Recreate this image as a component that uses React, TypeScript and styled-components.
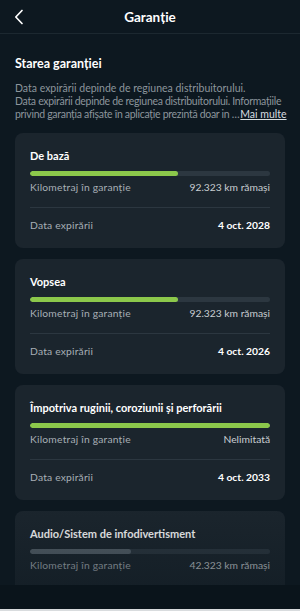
import React from "react";
import styled, { createGlobalStyle } from "styled-components";

const Global = createGlobalStyle`
  html, body { margin: 0; padding: 0; background: #0d1820; }
  body { font-family: "Lato", "Noto Sans", sans-serif; -webkit-font-smoothing: antialiased; }
  * { box-sizing: border-box; }
`;

const Page = styled.div`
  width: 300px;
  height: 611px;
  background: #0d1820;
  color: #ffffff;
  display: flex;
  flex-direction: column;
  overflow: hidden;
`;

const Header = styled.header`
  height: 34px;
  flex: none;
  display: grid;
  grid-template-columns: 40px 1fr 40px;
  align-items: center;
  border-bottom: 1px solid #1c2830;
`;

const BackButton = styled.button`
  background: none;
  border: 0;
  padding: 0 0 0 14px;
  height: 100%;
  display: flex;
  align-items: center;
  color: #fff;
`;

const Title = styled.h1`
  margin: 0;
  text-align: center;
  font-size: 13.5px;
  line-height: 16px;
  font-weight: 700;
`;

const Scroll = styled.div`
  position: relative;
  flex: 1;
  overflow: hidden;
  padding: 22px 15px 0;
`;

const Fade = styled.div`
  position: absolute;
  left: 0;
  right: 0;
  bottom: 0;
  height: 80px;
  background: linear-gradient(to bottom, rgba(13, 24, 32, 0) 0%, rgba(13, 24, 32, 0.45) 100%);
  pointer-events: none;
`;

const SectionTitle = styled.h2`
  margin: 0 0 10px;
  font-size: 12.5px;
  line-height: 16px;
  font-weight: 700;
`;

const Description = styled.div`
  margin: 0 0 12px;
  font-size: 10.5px;
  line-height: 13px;
  color: #8c959c;
`;

const Line = styled.div<{ $tight?: boolean }>`
  white-space: nowrap;
  letter-spacing: ${(p) => (p.$tight ? "-0.3px" : "0")};
`;

const More = styled.span`
  color: #d8dde0;
  text-decoration: underline;
  margin-left: 1px;
  letter-spacing: 0;
`;

const Cards = styled.div`
  display: flex;
  flex-direction: column;
  gap: 11px;
`;

const Card = styled.section`
  background: #1b252d;
  border-radius: 8px;
  padding: 16px 15px 16px;
`;

const CardTitle = styled.h3`
  margin: 0 0 8px;
  font-size: 11px;
  line-height: 14px;
  font-weight: 700;
  color: #ffffff;
`;

const Track = styled.div`
  height: 5px;
  border-radius: 3px;
  background: #2c3740;
  overflow: hidden;
`;

const Fill = styled.div<{ $muted?: boolean }>`
  height: 100%;
  border-radius: 3px;
  background: ${(p) => (p.$muted ? "#56616a" : "#8cc84b")};
`;

const Row = styled.div<{ $divided?: boolean }>`
  display: flex;
  justify-content: space-between;
  align-items: center;
  font-size: 10.3px;
  line-height: 13px;
  padding: ${(p) => (p.$divided ? "11px 0 0" : "5px 0 13px")};
  border-bottom: ${(p) => (p.$divided ? "none" : "1px solid #2c3740")};
`;

const Label = styled.span`
  color: #a7afb5;
  letter-spacing: 0.2px;
`;

const Value = styled.span<{ $strong?: boolean }>`
  color: ${(p) => (p.$strong ? "#ffffff" : "#c8cdd1")};
  font-weight: ${(p) => (p.$strong ? 700 : 400)};
`;

const Bottom = styled.div`
  flex: none;
  height: 26px;
  background: #0a141b;
  border-bottom: 2px solid #d9dcde;
`;

type Warranty = {
  title: string;
  pct: number;
  km: string;
  date?: string;
  muted?: boolean;
};

const items: Warranty[] = [
  { title: "De bază", pct: 61.5, km: "92.323 km rămași", date: "4 oct. 2028" },
  { title: "Vopsea", pct: 61.5, km: "92.323 km rămași", date: "4 oct. 2026" },
  { title: "Împotriva ruginii, coroziunii și perforării", pct: 100, km: "Nelimitată", date: "4 oct. 2033" },
  { title: "Audio/Sistem de infodivertisment", pct: 42, km: "42.323 km rămași", muted: true },
];

export default function App() {
  return (
    <>
      <Global />
      <Page>
        <Header>
          <BackButton aria-label="Înapoi">
            <svg width="10" height="16" viewBox="0 0 10 16">
              <path d="M8 1.5 L1.8 8 L8 14.5" fill="none" stroke="#fff" strokeWidth="1.7" strokeLinecap="round" strokeLinejoin="round" />
            </svg>
          </BackButton>
          <Title>Garanție</Title>
          <span />
        </Header>
        <Scroll>
          <SectionTitle>Starea garanției</SectionTitle>
          <Description>
            <Line>Data expirării depinde de regiunea distribuitorului.</Line>
            <Line $tight>Data expirării depinde de regiunea distribuitorului. Informațiile</Line>
            <Line $tight>
              privind garanția afișate în aplicație prezintă doar in …<More>Mai multe</More>
            </Line>
          </Description>
          <Cards>
            {items.map((it) => (
              <Card key={it.title}>
                <CardTitle>{it.title}</CardTitle>
                <Track>
                  <Fill $muted={it.muted} style={{ width: `${it.pct}%` }} />
                </Track>
                <Row>
                  <Label>Kilometraj în garanție</Label>
                  <Value>{it.km}</Value>
                </Row>
                {it.date && (
                  <Row $divided>
                    <Label>Data expirării</Label>
                    <Value $strong>{it.date}</Value>
                  </Row>
                )}
              </Card>
            ))}
          </Cards>
          <Fade />
        </Scroll>
        <Bottom />
      </Page>
    </>
  );
}
